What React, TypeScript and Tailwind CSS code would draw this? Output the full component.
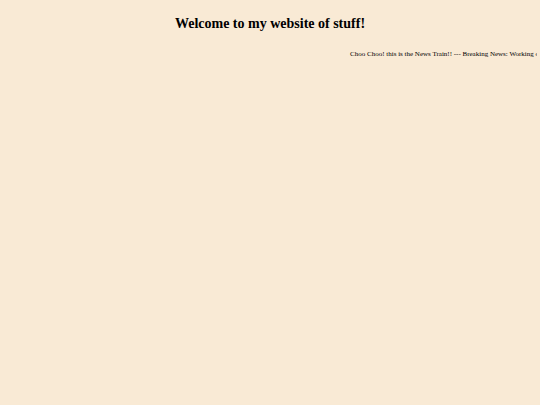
const news = "Choo Choo! this is the News Train!! --- Breaking News: Working on";

const App = () => {
  return (
    <main className="min-h-screen bg-[#f9ead5] px-[3px] pt-3 font-['Liberation_Serif',serif] text-black">
      <h1 className="text-center text-[14px] leading-6 font-bold">
        Welcome to my website of stuff!
      </h1>

      {/* News ticker */}
      <div className="mt-3 overflow-hidden pl-[65%]">
        <p className="text-[7px] leading-3 whitespace-nowrap">{news}</p>
      </div>
    </main>
  );
};

export default App;
